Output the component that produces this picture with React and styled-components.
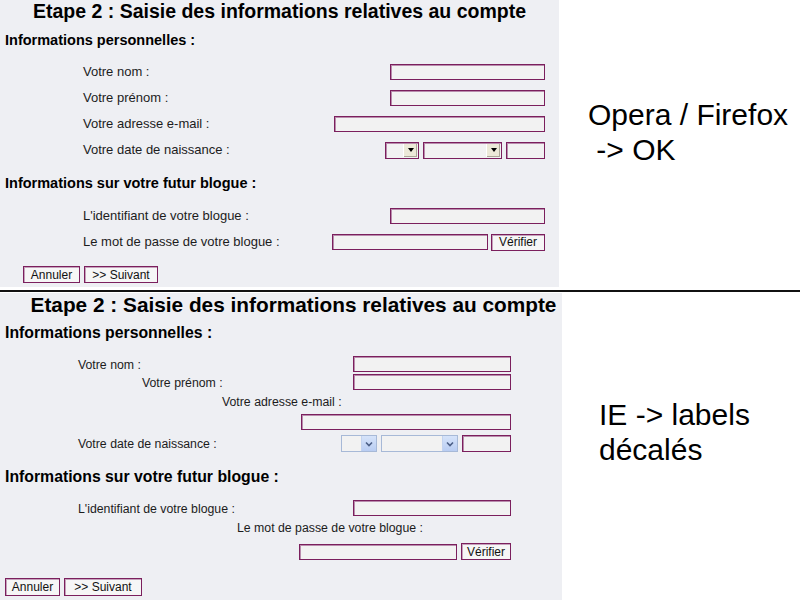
import React from 'react';
import styled, { createGlobalStyle } from 'styled-components';

const GlobalStyle = createGlobalStyle`
  html, body {
    margin: 0;
    padding: 0;
    background: #fff;
  }
  body {
    font-family: "Liberation Sans", Arial, sans-serif;
    width: 800px;
    height: 600px;
    overflow: hidden;
  }
`;

const Page = styled.div`
  display: flex;
  flex-direction: column;
  width: 800px;
  height: 600px;
`;

const Section = styled.div`
  display: flex;
  height: ${({ $height }) => $height}px;
  margin-top: ${({ $mt }) => $mt || 0}px;
`;

const Divider = styled.div`
  height: 2px;
  background: #111;
`;

const Panel = styled.div`
  width: ${({ $width }) => $width}px;
  height: ${({ $height }) => $height}px;
  flex-shrink: 0;
  background: #eeeff3;
  display: flex;
  flex-direction: column;
  color: #1c1c1c;
`;

const Title = styled.div`
  width: ${({ $span }) => $span}px;
  height: ${({ $height }) => $height}px;
  line-height: ${({ $height }) => $height}px;
  font-size: ${({ $size }) => $size}px;
  font-weight: bold;
  color: #000;
  text-align: center;
  white-space: nowrap;
`;

const Heading = styled.div`
  margin-top: ${({ $mt }) => $mt}px;
  height: 20px;
  line-height: 20px;
  padding-left: 5px;
  font-size: ${({ $size }) => $size}px;
  font-weight: bold;
  color: #000;
  white-space: nowrap;
`;

const FieldRow = styled.div`
  box-sizing: border-box;
  width: ${({ $right }) => $right}px;
  height: ${({ $h }) => $h}px;
  margin-top: ${({ $mt }) => $mt || 0}px;
  padding-left: ${({ $indent }) => $indent || 0}px;
  display: flex;
  align-items: ${({ $align }) => $align || 'center'};
  justify-content: ${({ $justify }) => $justify || 'space-between'};
`;

const Label = styled.span`
  font-size: ${({ $size }) => $size}px;
  line-height: 14px;
  white-space: nowrap;
`;

const Fields = styled.div`
  display: flex;
  align-items: center;
  gap: ${({ $gap }) => $gap || 0}px;
`;

const TextInput = styled.div`
  box-sizing: border-box;
  width: ${({ $w }) => $w}px;
  height: ${({ $h }) => $h || 16}px;
  background: #f2f2f2;
  border: 1px solid #7b1f5d;
  box-shadow: inset 1px 1px 0 #b98cad;
`;

const SelectBox = styled.div`
  box-sizing: border-box;
  position: relative;
  width: ${({ $w }) => $w}px;
  height: 17px;
  background: #f2f2f2;
  border: 1px solid ${({ $ie }) => ($ie ? '#a7b9d7' : '#7b1f5d')};
  box-shadow: ${({ $ie }) => ($ie ? 'none' : 'inset 1px 1px 0 #b98cad')};
`;

const ArrowBox = styled.span`
  position: absolute;
  top: ${({ $ie }) => ($ie ? 0 : 1)}px;
  right: ${({ $ie }) => ($ie ? 0 : 1)}px;
  bottom: ${({ $ie }) => ($ie ? 0 : 1)}px;
  width: ${({ $ie }) => ($ie ? 14 : 13)}px;
  display: flex;
  align-items: center;
  justify-content: center;
  background: ${({ $ie }) =>
    $ie ? 'linear-gradient(#d6e3fa, #b9cdf2)' : '#ece9d8'};
  border-left: 1px solid ${({ $ie }) => ($ie ? '#c3d3ef' : '#fff')};
  box-shadow: ${({ $ie }) => ($ie ? 'none' : 'inset -1px -1px 0 #aca899')};
`;

const Triangle = styled.span`
  width: 0;
  height: 0;
  border-left: 3px solid transparent;
  border-right: 3px solid transparent;
  border-top: 4px solid #000;
`;

const Button = styled.div`
  box-sizing: border-box;
  width: ${({ $w }) => $w}px;
  height: ${({ $h }) => $h || 17}px;
  display: flex;
  align-items: center;
  justify-content: center;
  font-size: 12px;
  color: #111;
  background: #f6f6f6;
  border: 1px solid #7b1f5d;
  box-shadow: inset 1px 1px 0 #c6a2bc;
  white-space: nowrap;
`;

const ButtonBar = styled.div`
  display: flex;
  gap: 4px;
  margin-top: ${({ $mt }) => $mt}px;
  padding-left: ${({ $indent }) => $indent}px;
`;

const Note = styled.div`
  padding-left: ${({ $indent }) => $indent}px;
  padding-top: ${({ $top }) => $top}px;
  font-size: 30px;
  line-height: 35px;
  color: #000;
  white-space: pre;
`;

const Select = ({ w, ie }) => (
  <SelectBox $w={w} $ie={ie}>
    <ArrowBox $ie={ie}>
      {ie ? (
        <svg width="8" height="6" viewBox="0 0 8 6">
          <path d="M1 1.5 L4 4.5 L7 1.5" fill="none" stroke="#4c5f86" strokeWidth="1.6" />
        </svg>
      ) : (
        <Triangle />
      )}
    </ArrowBox>
  </SelectBox>
);

const FirefoxForm = () => (
  <Panel $width={559} $height={287}>
    <Title $span={559} $height={22} $size={19.5}>
      Etape 2 : Saisie des informations relatives au compte
    </Title>
    <Heading $mt={8} $size={14.5}>Informations personnelles :</Heading>
    <FieldRow $right={545} $h={26} $mt={9} $indent={83}>
      <Label $size={13}>Votre nom :</Label>
      <TextInput $w={155} />
    </FieldRow>
    <FieldRow $right={545} $h={26} $indent={83}>
      <Label $size={13}>Votre prénom :</Label>
      <TextInput $w={155} />
    </FieldRow>
    <FieldRow $right={545} $h={26} $indent={83}>
      <Label $size={13}>Votre adresse e-mail :</Label>
      <TextInput $w={211} />
    </FieldRow>
    <FieldRow $right={545} $h={26} $indent={83}>
      <Label $size={13}>Votre date de naissance :</Label>
      <Fields $gap={4}>
        <Select w={34} />
        <Select w={79} />
        <TextInput $w={39} $h={17} />
      </Fields>
    </FieldRow>
    <Heading $mt={10} $size={14.5}>Informations sur votre futur blogue :</Heading>
    <FieldRow $right={545} $h={26} $mt={10} $indent={83}>
      <Label $size={13}>L'identifiant de votre blogue :</Label>
      <TextInput $w={155} />
    </FieldRow>
    <FieldRow $right={545} $h={26} $indent={83}>
      <Label $size={13}>Le mot de passe de votre blogue :</Label>
      <Fields $gap={3}>
        <TextInput $w={156} />
        <Button $w={54}>Vérifier</Button>
      </Fields>
    </FieldRow>
    <ButtonBar $mt={11} $indent={23}>
      <Button $w={57}>Annuler</Button>
      <Button $w={74}>&gt;&gt; Suivant</Button>
    </ButtonBar>
  </Panel>
);

const IEForm = () => (
  <Panel $width={562} $height={307}>
    <Title $span={587} $height={24} $size={20.8}>
      Etape 2 : Saisie des informations relatives au compte
    </Title>
    <Heading $mt={6} $size={15.8}>Informations personnelles :</Heading>
    <FieldRow $right={511} $h={17} $mt={12} $indent={78} $align="flex-end">
      <Label $size={12.3}>Votre nom :</Label>
      <TextInput $w={158} />
    </FieldRow>
    <FieldRow $right={511} $h={18} $indent={142} $align="flex-end">
      <Label $size={12.3}>Votre prénom :</Label>
      <TextInput $w={158} />
    </FieldRow>
    <FieldRow $right={511} $h={16} $mt={4} $indent={222} $justify="flex-start">
      <Label $size={12.3}>Votre adresse e-mail :</Label>
    </FieldRow>
    <FieldRow $right={511} $h={16} $mt={4} $justify="flex-end">
      <TextInput $w={210} />
    </FieldRow>
    <FieldRow $right={511} $h={17} $mt={5} $indent={78}>
      <Label $size={12.3}>Votre date de naissance :</Label>
      <Fields $gap={4}>
        <Select w={36} ie />
        <Select w={77} ie />
        <TextInput $w={49} $h={17} />
      </Fields>
    </FieldRow>
    <Heading $mt={15} $size={15.8}>Informations sur votre futur blogue :</Heading>
    <FieldRow $right={511} $h={17} $mt={12} $indent={78} $align="flex-end">
      <Label $size={12.3}>L'identifiant de votre blogue :</Label>
      <TextInput $w={158} />
    </FieldRow>
    <FieldRow $right={511} $h={16} $mt={4} $indent={237} $justify="flex-start">
      <Label $size={12.3}>Le mot de passe de votre blogue :</Label>
    </FieldRow>
    <FieldRow $right={511} $h={17} $mt={7} $justify="flex-end">
      <Fields $gap={4}>
        <TextInput $w={158} />
        <Button $w={50}>Vérifier</Button>
      </Fields>
    </FieldRow>
    <ButtonBar $mt={18} $indent={5}>
      <Button $w={55} $h={18}>Annuler</Button>
      <Button $w={78} $h={18}>&gt;&gt; Suivant</Button>
    </ButtonBar>
  </Panel>
);

export default function App() {
  return (
    <>
      <GlobalStyle />
      <Page>
        <Section $height={290}>
          <FirefoxForm />
          <Note $indent={29} $top={97}>
            {'Opera / Firefox\n -> OK'}
          </Note>
        </Section>
        <Divider />
        <Section $height={307} $mt={1}>
          <IEForm />
          <Note $indent={37} $top={104}>
            {'IE -> labels\ndécalés'}
          </Note>
        </Section>
      </Page>
    </>
  );
}
